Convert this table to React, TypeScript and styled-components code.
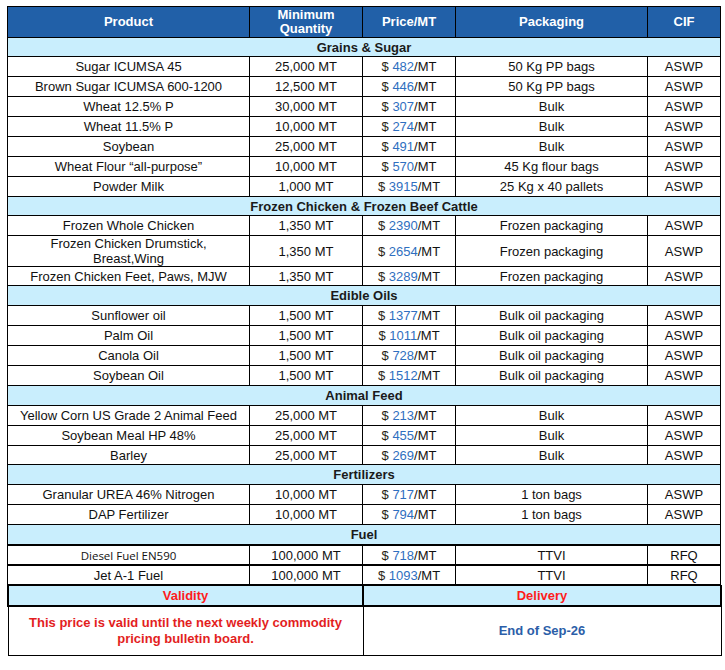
import React, { FC } from "react";
import styled, { createGlobalStyle } from "styled-components";

const GlobalStyle = createGlobalStyle`
  body {
    margin: 0;
    background: #ffffff;
    font-family: "Liberation Sans", Arial, sans-serif;
  }
`;

const Page = styled.div`
  padding: 6px 0 0 7px;
  width: 713px;
`;

const Table = styled.table`
  width: 713px;
  border-collapse: collapse;
  table-layout: fixed;
  font-size: 13px;
  color: #111;
`;

const HeadCell = styled.th`
  background: #2160a8;
  color: #ffffff;
  font-weight: bold;
  font-size: 13px;
  line-height: 14px;
  border: 1px solid #000;
  height: 30px;
  padding: 0;
  text-align: center;
`;

const SectionCell = styled.td<{ $heavy?: boolean; $tight?: boolean }>`
  background: #c9eefd;
  font-weight: bold;
  color: #1a1a1a;
  border: 1px solid #000;
  border-bottom-width: ${(p) => (p.$heavy ? "2px" : "1px")};
  height: ${(p) => (p.$tight ? "18px" : "19px")};
  padding: 0;
  text-align: center;
  line-height: 15px;
`;

const Cell = styled.td<{ $heavy?: boolean; $small?: boolean; $tight?: boolean }>`
  border: 1px solid #000;
  border-top-width: ${(p) => (p.$heavy ? "2px" : "1px")};
  height: ${(p) => (p.$heavy || p.$tight ? "18px" : "19px")};
  padding: 0 2px;
  text-align: center;
  line-height: 15px;
  white-space: pre-line;
  font-family: ${(p) =>
    p.$small ? '"Open Sans", "DejaVu Sans", sans-serif' : "inherit"};
  font-size: ${(p) => (p.$small ? "11.5px" : "13px")};
`;

const Dollar = styled.span`
  color: #2a1f14;
`;

const Amount = styled.span`
  color: #2f6fc0;
`;

const Footer = styled.table`
  width: 713px;
  border-collapse: collapse;
  table-layout: fixed;
  font-size: 13px;
`;

const FootHead = styled.th`
  background: #c9eefd;
  color: #ff1c1c;
  font-weight: bold;
  border: 2px solid #000;
  border-top-width: 1px;
  height: 19px;
  padding: 0;
  line-height: 15px;
`;

const FootCell = styled.td<{ $tone: "red" | "blue" }>`
  border: 1px solid #000;
  border-top: 0;
  height: 48px;
  padding: 0 10px;
  text-align: center;
  font-weight: bold;
  line-height: 16px;
  color: ${(p) => (p.$tone === "red" ? "#e31e1e" : "#2b5ea8")};
`;

type Row = {
  product: string;
  qty: string;
  price: string;
  pack: string;
  cif: string;
  small?: boolean;
  tight?: boolean;
};

type Section = { title: string; heavy?: boolean; tight?: boolean; rows: Row[] };

const r = (
  product: string,
  qty: string,
  price: string,
  pack: string,
  cif = "ASWP",
  extra: Partial<Row> = {}
): Row => ({ product, qty, price, pack, cif, ...extra });

const sections: Section[] = [
  {
    title: "Grains & Sugar",
    tight: true,
    rows: [
      r("Sugar ICUMSA 45", "25,000 MT", "482", "50 Kg PP bags"),
      r("Brown Sugar ICUMSA 600-1200", "12,500 MT", "446", "50 Kg PP bags"),
      r("Wheat 12.5% P", "30,000 MT", "307", "Bulk"),
      r("Wheat 11.5% P", "10,000 MT", "274", "Bulk"),
      r("Soybean", "25,000 MT", "491", "Bulk"),
      r("Wheat Flour \u201call-purpose\u201d", "10,000 MT", "570", "45 Kg flour bags"),
      r("Powder Milk", "1,000 MT", "3915", "25 Kg x 40 pallets"),
    ],
  },
  {
    title: "Frozen Chicken & Frozen Beef Cattle",
    tight: true,
    rows: [
      r("Frozen Whole Chicken", "1,350 MT", "2390", "Frozen packaging"),
      r("Frozen Chicken Drumstick,\nBreast,Wing", "1,350 MT", "2654", "Frozen packaging"),
      r("Frozen Chicken Feet, Paws, MJW", "1,350 MT", "3289", "Frozen packaging", "ASWP", {
        tight: true,
      }),
    ],
  },
  {
    title: "Edible Oils",
    rows: [
      r("Sunflower oil", "1,500 MT", "1377", "Bulk oil packaging"),
      r("Palm Oil", "1,500 MT", "1011", "Bulk oil packaging"),
      r("Canola Oil", "1,500 MT", "728", "Bulk oil packaging"),
      r("Soybean Oil", "1,500 MT", "1512", "Bulk oil packaging"),
    ],
  },
  {
    title: "Animal Feed",
    rows: [
      r("Yellow Corn US Grade 2 Animal Feed", "25,000 MT", "213", "Bulk"),
      r("Soybean Meal HP 48%", "25,000 MT", "455", "Bulk"),
      r("Barley", "25,000 MT", "269", "Bulk", "ASWP", { tight: true }),
    ],
  },
  {
    title: "Fertilizers",
    rows: [
      r("Granular UREA 46% Nitrogen", "10,000 MT", "717", "1 ton bags"),
      r("DAP Fertilizer", "10,000 MT", "794", "1 ton bags"),
    ],
  },
  {
    title: "Fuel",
    heavy: true,
    rows: [
      r("Diesel Fuel EN590", "100,000 MT", "718", "TTVI", "RFQ", { small: true }),
      r("Jet A-1 Fuel", "100,000 MT", "1093", "TTVI", "RFQ"),
    ],
  },
];

const Price: FC<{ value: string }> = ({ value }) => (
  <>
    <Dollar>$ </Dollar>
    <Amount>{value}</Amount>/MT
  </>
);

const App: FC = () => {
  return (
    <Page>
      <GlobalStyle />
      <Table>
        <colgroup>
          <col style={{ width: 242 }} />
          <col style={{ width: 113 }} />
          <col style={{ width: 93 }} />
          <col style={{ width: 192 }} />
          <col style={{ width: 73 }} />
        </colgroup>
        <thead>
          <tr>
            <HeadCell>Product</HeadCell>
            <HeadCell>
              Minimum
              <br />
              Quantity
            </HeadCell>
            <HeadCell>Price/MT</HeadCell>
            <HeadCell>Packaging</HeadCell>
            <HeadCell>CIF</HeadCell>
          </tr>
        </thead>
        <tbody>
          {sections.map((section) => (
            <React.Fragment key={section.title}>
              <tr>
                <SectionCell colSpan={5} $heavy={section.heavy} $tight={section.tight}>
                  {section.title}
                </SectionCell>
              </tr>
              {section.rows.map((row) => (
                <tr key={row.product}>
                  <Cell $heavy={section.heavy} $tight={row.tight} $small={row.small}>
                    {row.product}
                  </Cell>
                  <Cell $heavy={section.heavy} $tight={row.tight}>
                    {row.qty}
                  </Cell>
                  <Cell $heavy={section.heavy} $tight={row.tight}>
                    <Price value={row.price} />
                  </Cell>
                  <Cell $heavy={section.heavy} $tight={row.tight}>
                    {row.pack}
                  </Cell>
                  <Cell $heavy={section.heavy} $tight={row.tight}>
                    {row.cif}
                  </Cell>
                </tr>
              ))}
            </React.Fragment>
          ))}
        </tbody>
      </Table>
      <Footer>
        <colgroup>
          <col style={{ width: 355 }} />
          <col style={{ width: 358 }} />
        </colgroup>
        <thead>
          <tr>
            <FootHead>Validity</FootHead>
            <FootHead>Delivery</FootHead>
          </tr>
        </thead>
        <tbody>
          <tr>
            <FootCell $tone="red">
              This price is valid until the next weekly commodity
              <br />
              pricing bulletin board.
            </FootCell>
            <FootCell $tone="blue">End of Sep-26</FootCell>
          </tr>
        </tbody>
      </Footer>
    </Page>
  );
};

export default App;
